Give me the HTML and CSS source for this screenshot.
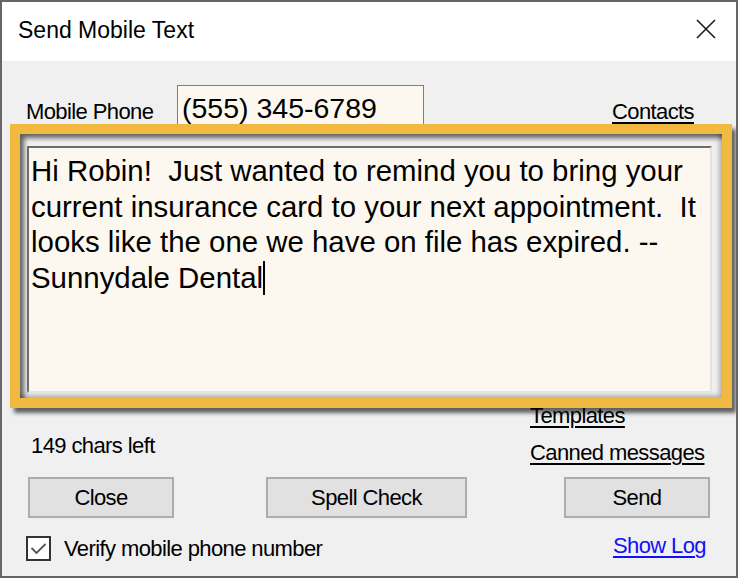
FILE: index.html
```html
<!DOCTYPE html>
<html>
<head>
<meta charset="utf-8">
<title>Send Mobile Text</title>
<link rel="stylesheet" href="styles.css">
</head>
<body>
<div class="window">
  <div class="titlebar">
    <span class="title">Send Mobile Text</span>
    <svg class="close" width="20" height="20" viewBox="0 0 20 20"><path d="M1 1 L19 19 M19 1 L1 19" stroke="#1a1a1a" stroke-width="1.6" fill="none"/></svg>
  </div>
  <div class="content">
    <div class="phone-row">
      <span class="label">Mobile Phone</span>
      <div class="phone-input">(555) 345-6789</div>
      <a class="link contacts">Contacts</a>
    </div>
    <div class="info-row">
      <span class="chars">149 chars left</span>
      <div class="links">
        <a class="link">Templates</a>
        <a class="link">Canned messages</a>
      </div>
    </div>
    <div class="buttons">
      <button class="btn btn-close">Close</button>
      <button class="btn btn-spell">Spell Check</button>
      <button class="btn btn-send">Send</button>
    </div>
    <div class="footer">
      <span class="checkbox"><svg width="21" height="21" viewBox="0 0 21 21"><path d="M3.5 10 L8.5 15 L17.5 6" stroke="#555" stroke-width="1.8" fill="none"/></svg></span>
      <span class="verify">Verify mobile phone number</span>
      <a class="link showlog">Show Log</a>
    </div>
  </div>
  <div class="callout">
    <div class="callout-inner">
      <div class="message">
        <div class="line">Hi Robin!  Just wanted to remind you to bring your</div>
        <div class="line">current insurance card to your next appointment.  It</div>
        <div class="line">looks like the one we have on file has expired. --</div>
        <div class="line">Sunnydale Dental<span class="caret"></span></div>
      </div>
    </div>
  </div>
</div>
</body>
</html>
```
FILE: styles.css
```css
html, body {
  margin: 0;
  padding: 0;
  background: #5e5e5e;
}
.window {
  position: relative;
  width: 738px;
  height: 578px;
  box-sizing: border-box;
  border: 2px solid #666666;
  background: #f0f0f0;
  font-family: "Liberation Sans", Arial, sans-serif;
  color: #000;
  overflow: hidden;
}
.titlebar {
  display: flex;
  align-items: flex-start;
  height: 59px;
  background: #ffffff;
}
.title {
  font-size: 23px;
  line-height: 26px;
  padding-top: 15px;
  padding-left: 16px;
}
.close {
  margin-left: auto;
  margin-right: 20px;
  margin-top: 17px;
}
.content {
  font-size: 22px;
  letter-spacing: -0.6px;
}
.phone-row {
  display: flex;
  align-items: flex-start;
  margin-top: 24px;
  height: 46px;
  padding-right: 42px;
}
.label {
  width: 175px;
  box-sizing: border-box;
  padding-left: 24px;
  padding-top: 14px;
  line-height: 26px;
}
.phone-input {
  width: 247px;
  height: 46px;
  box-sizing: border-box;
  border: 1.5px solid #7f7f7f;
  background: #fdf8ef;
  font-size: 28.5px;
  letter-spacing: 0;
  line-height: 34px;
  padding-left: 4px;
  padding-top: 5px;
}
.link {
  color: #000;
  text-decoration: underline;
  text-decoration-thickness: 2px;
  text-underline-offset: 3px;
  cursor: pointer;
}
.contacts {
  margin-left: auto;
  padding-top: 14px;
  line-height: 26px;
}
.info-row {
  display: grid;
  grid-template-columns: 528px 1fr;
  margin-top: 266px;
  height: 74px;
}
.chars {
  padding-left: 29px;
  margin-top: 30px;
  line-height: 37px;
}
.links {
  display: flex;
  flex-direction: column;
  align-items: flex-start;
}
.links .link {
  line-height: 37px;
}
.buttons {
  display: flex;
  margin-top: 6px;
  padding-left: 26px;
}
.btn {
  height: 41px;
  box-sizing: border-box;
  background: #e1e1e1;
  border: 2px solid #adadad;
  font-family: "Liberation Sans", Arial, sans-serif;
  font-size: 22px;
  letter-spacing: -0.6px;
  color: #000;
  padding: 0;
}
.btn-close {
  width: 146px;
}
.btn-spell {
  width: 201px;
  margin-left: 92px;
}
.btn-send {
  width: 146px;
  margin-left: 97px;
}
.footer {
  display: flex;
  align-items: flex-start;
  margin-top: 18px;
  padding-left: 24px;
  padding-right: 30px;
}
.checkbox {
  width: 25px;
  height: 25px;
  box-sizing: border-box;
  border: 2px solid #333333;
  background: #ffffff;
  display: flex;
  align-items: center;
  justify-content: center;
}
.verify {
  margin-left: 13px;
  line-height: 26px;
}
.showlog {
  margin-left: auto;
  margin-top: -3px;
  line-height: 26px;
  color: #1010ff;
}
.callout {
  position: absolute;
  left: 8px;
  top: 122px;
  width: 722px;
  height: 284px;
  box-sizing: border-box;
  border: 10px solid #f0b941;
  box-shadow: 4px 5px 4px rgba(0, 0, 0, 0.6);
}
.callout-inner {
  width: 100%;
  height: 100%;
  box-sizing: border-box;
  padding: 12px 10px 5px 7px;
  background: #f0f0f0;
  box-shadow: inset 4px 4px 5px rgba(0, 0, 0, 0.6), inset -3px -3px 4px rgba(0, 0, 0, 0.25);
}
.message {
  width: 100%;
  height: 100%;
  box-sizing: border-box;
  border-style: solid;
  border-width: 2px;
  border-color: #6d6d6d #e3e3e3 #e3e3e3 #6d6d6d;
  background: #fdf8ef;
  padding: 5px 2px 0 2px;
  font-size: 29.4px;
  line-height: 35.5px;
  color: #000;
}
.line {
  white-space: pre;
}
.caret {
  display: inline-block;
  width: 0;
  height: 34px;
  border-left: 2px solid #000;
  vertical-align: top;
  margin-top: 1px;
}
```
